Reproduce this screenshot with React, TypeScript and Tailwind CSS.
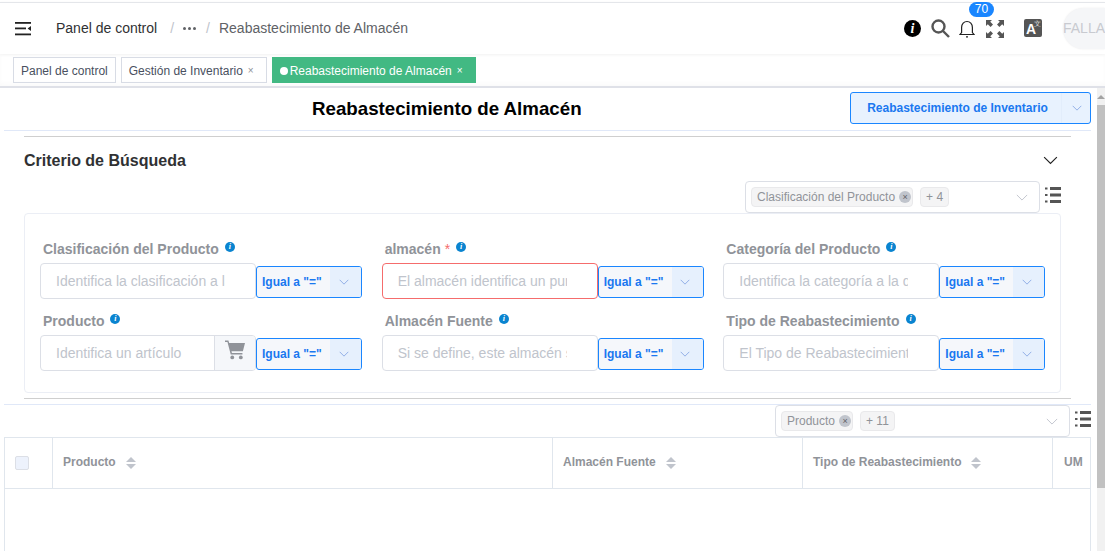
import React from "react";

const Chevron = ({ className = "", color = "#c0c4cc", w = 14 }: { className?: string; color?: string; w?: number }) => (
  <svg width={w} height={w / 2 + 1} viewBox="0 0 14 8" className={className} fill="none" stroke={color} strokeWidth="1.1">
    <path d="M1 1l6 6 6-6" />
  </svg>
);

const InfoDot = () => (
  <span className="ml-[6px] mt-[1px] inline-flex h-[10px] w-[10px] items-center justify-center rounded-full bg-[#0a84d0] text-[8px] font-bold italic leading-none text-white [font-family:'Liberation_Serif',serif]">
    i
  </span>
);

const ListIcon = () => (
  <svg width="16" height="16" viewBox="0 0 16 16" fill="#555">
    <rect x="0" y="0.5" width="2.5" height="2" />
    <rect x="5" y="0" width="11" height="3" />
    <rect x="0" y="7" width="2.5" height="2" />
    <rect x="5" y="6.5" width="11" height="3" />
    <rect x="0" y="13.5" width="2.5" height="2" />
    <rect x="5" y="13" width="11" height="3" />
  </svg>
);

const SortIcon = () => (
  <svg width="10" height="12" viewBox="0 0 10 12" fill="#c0c4cc" className="ml-[10px] mt-[1px]">
    <path d="M5 0l5 5H0z" />
    <path d="M0 7h10l-5 5z" />
  </svg>
);

const CartIcon = () => (
  <svg width="20" height="20" viewBox="0 0 21 20" fill="#909399" className="mb-[6px]">
    <path d="M0 0h3.6l.8 2.6H21l-2.2 8.6H6.8l.5 2h11v1.6H6L2.6 1.6H0z" />
    <circle cx="7.6" cy="17.8" r="2" />
    <circle cx="16.6" cy="17.8" r="2" />
  </svg>
);

const OpSelect = () => (
  <div className="mt-[2px] flex h-[32px] w-[106px] shrink-0 overflow-hidden rounded-[3px] border border-[#1a86ff] bg-[#f5f7fb]">
    <div className="flex flex-1 items-center pl-[5px] text-[12px] font-bold text-[#1a78f0]">Igual a "="</div>
    <div className="flex w-[31px] items-center justify-center bg-[#e6f0fd] pr-[4px]">
      <Chevron w={10} color="#7d9fe0" />
    </div>
  </div>
);

type FieldProps = {
  label: string;
  placeholder: string;
  required?: boolean;
  cart?: boolean;
};

const Field = ({ label, placeholder, required, cart }: FieldProps) => (
  <div>
    <div className="-mt-[1px] flex h-[22px] items-start pl-[3px] text-[14px] font-bold leading-[16px] text-[#909399]">
      <span>{label}</span>
      {required && <span className="ml-[4px] font-normal text-[#f56c6c]">*</span>}
      <InfoDot />
    </div>
    <div className="flex items-center">
      <div
        className={`flex h-[36px] w-[216px] shrink-0 overflow-hidden rounded-[4px] border ${
          required ? "border-[#f56c6c]" : "border-[#dcdfe6]"
        } bg-white`}
      >
        <input
          readOnly
          placeholder={placeholder}
          className={`h-full min-w-0 flex-1 pl-[15px] text-[14px] outline-none placeholder:text-[#c0c4cc] ${cart ? "pr-[15px]" : "pr-[30px]"}`}
        />
        {cart && (
          <div className="flex w-[41px] shrink-0 items-center justify-center border-l border-[#dcdfe6] bg-[#f5f7fa]">
            <CartIcon />
          </div>
        )}
      </div>
      <OpSelect />
    </div>
  </div>
);

const Tag = ({ text, close }: { text: string; close?: boolean }) => (
  <span className={`flex h-[20px] items-center rounded-[4px] border border-[#e9e9eb] bg-[#f4f4f5] pb-[1px] pl-[5px] text-[12px] text-[#909399] ${close ? "pr-[1px]" : "pr-[5px]"}`}>
    {text}
    {close && (
      <span className="ml-[4px] mt-[1px] flex h-[12px] w-[12px] items-center justify-center rounded-full bg-[#c0c4cc] text-[9px] leading-none text-[#606266]">
        ×
      </span>
    )}
  </span>
);

const ColumnPicker = ({ tags }: { tags: React.ReactNode }) => (
  <div className="flex items-start">
    <div className="flex h-[32px] w-[295px] items-center gap-[7px] rounded-[4px] border border-[#dcdfe6] bg-white pl-[5px] pr-[11px]">
      {tags}
      <Chevron className="ml-auto" w={12} />
    </div>
    <div className="ml-[5px] mt-[6px] w-[16px]">
      <ListIcon />
    </div>
  </div>
);

const HeadCell = ({ label, className }: { label: string; className: string }) => (
  <div className={`flex items-center border-r border-[#e0e6ed] pb-[2px] pl-[10px] text-[12px] font-bold text-[#909399] ${className}`}>
    {label}
    <SortIcon />
  </div>
);

export default function App() {
  return (
    <div className="relative flex h-[551px] w-[1105px] flex-col overflow-hidden bg-white text-[#303133] [font-family:'Liberation_Sans',Arial,sans-serif]">
      {/* top bar */}
      <header className="mt-[2px] flex h-[52px] shrink-0 items-center border-t border-[#e4e6ea] shadow-[0_1px_3px_rgba(0,0,0,0.06)]">
        <svg width="17" height="14" viewBox="0 0 17 14" fill="#222" className="ml-[15px] shrink-0">
          <rect x="0" y="0" width="16" height="1.8" />
          <rect x="0" y="5.5" width="11" height="1.8" />
          <rect x="0" y="11.5" width="16" height="1.8" />
          <path d="M16 4v5l-3.4-2.5z" />
        </svg>
        <span className="ml-[24px] text-[14px] text-[#303133]">Panel de control</span>
        <span className="ml-[13px] text-[14px] text-[#c0c4cc]">/</span>
        <span className="ml-[9px] flex items-center gap-[2px]">
          <i className="h-[3px] w-[3px] rounded-full bg-[#606266]" />
          <i className="h-[3px] w-[3px] rounded-full bg-[#606266]" />
          <i className="h-[3px] w-[3px] rounded-full bg-[#606266]" />
        </span>
        <span className="ml-[10px] text-[14px] text-[#c0c4cc]">/</span>
        <span className="ml-[9px] text-[14px] text-[#606266]">Reabastecimiento de Almacén</span>

        <div className="ml-auto flex h-full items-center">
          <span className="flex h-[17px] w-[17px] items-center justify-center rounded-full bg-black text-[14px] font-bold italic leading-none text-white [font-family:'Liberation_Serif',serif]">
            i
          </span>
          <svg width="19" height="19" viewBox="0 0 19 19" fill="none" stroke="#555" strokeWidth="2.4" className="ml-[10px]">
            <circle cx="7.5" cy="7.5" r="6" />
            <path d="M12 12l6 6" />
          </svg>
          <div className="relative ml-[9px]">
            <svg width="16" height="18" viewBox="0 0 16 18" fill="none" stroke="#222" strokeWidth="1.2">
              <path d="M1 14.5h14l-1.6-2V7.5C13.4 4 11 1.5 8 1.5S2.6 4 2.6 7.5v5z" />
              <path d="M7 16.8h2" />
            </svg>
            <span className="absolute -top-[18px] left-[10px] flex h-[15px] w-[25px] items-center justify-center rounded-full bg-[#1a86ff] text-[12px] leading-none text-white">
              70
            </span>
          </div>
          <svg width="18" height="18" viewBox="0 0 18 18" fill="#555" className="ml-[11px]">
            <path d="M0 0h6L4.2 1.8 7 4.6 4.6 7 1.8 4.2 0 6z" />
            <path d="M18 0v6l-1.8-1.8L13.4 7 11 4.6l2.8-2.8L12 0z" />
            <path d="M0 18v-6l1.8 1.8L4.6 11 7 13.4l-2.8 2.8L6 18z" />
            <path d="M18 18h-6l1.8-1.8L11 13.4l2.4-2.4 2.8 2.8L18 12z" />
          </svg>
          <div className="relative mb-[1px] ml-[20px] flex h-[18px] w-[18px] items-end rounded-[2px] bg-[#555] pb-[1px] pl-[2px] text-[14px] font-bold leading-none text-white">
            A
            <span className="absolute right-[1px] top-[1px] text-[7px] font-normal leading-none text-[#ddd]">文</span>
          </div>
          <div className="ml-[21px] flex h-[41px] w-[42px] items-center overflow-hidden rounded-l-full bg-[#f5f6f8] text-[14px] text-[#c8cad0] shadow-[0_0_2px_rgba(0,0,0,0.08)]">
            FALLA
          </div>
        </div>
      </header>

      {/* tabs */}
      <nav className="flex h-[34px] shrink-0 items-start gap-[5px] border-b-2 border-[#dfe1e8] pl-[13px] pt-[3px] shadow-[inset_0_-3px_4px_rgba(0,0,0,0.02)]">
        <div className="flex h-[26px] items-center border border-[#d8dce5] px-[7px] pt-[1px] text-[12px] text-[#495060]">Panel de control</div>
        <div className="flex h-[26px] items-center border border-[#d8dce5] pl-[7px] pr-[12px] pt-[1px] text-[12px] text-[#495060]">
          Gestión de Inventario
          <span className="ml-[5px] text-[10px] leading-none text-[#909399]">×</span>
        </div>
        <div className="flex h-[26px] items-center bg-[#42b983] pl-[8px] pr-[13px] pt-[1px] text-[12px] text-white">
          <span className="mr-[2px] h-[8px] w-[8px] rounded-full bg-white" />
          Reabastecimiento de Almacén
          <span className="ml-[5px] text-[10px] leading-none">×</span>
        </div>
      </nav>

      <div className="flex min-h-0 flex-1">
        <main className="min-w-0 flex-1 pl-[4px] pr-[6px]">
          {/* title */}
          <div className="flex h-[43px] items-center border-b border-[#e0e8f8]">
            <h1 className="mb-[0px] ml-[308px] text-[18.72px] font-bold leading-none text-black">Reabastecimiento de Almacén</h1>
            <div className="mb-[3px] ml-auto flex h-[32px] w-[241px] overflow-hidden rounded-[3px] border border-[#1a86ff] bg-[#e8f2fe]">
              <div className="flex flex-1 items-center justify-center border-r border-[#e2edfb] pl-[3px] text-[12px] font-bold text-[#1a78f0]">
                Reabastecimiento de Inventario
              </div>
              <div className="flex w-[28px] items-center justify-center pl-[1px]">
                <Chevron w={10} color="#7d9fe0" />
              </div>
            </div>
          </div>

          {/* search section */}
          <section className="mx-[20px] mt-[5px] border-y border-[#cfcfcf]">
            <div className="flex h-[44px] items-start justify-between pr-[13px] pt-[15px]">
              <h2 className="text-[16px] font-bold leading-[18px] text-[#303133]">Criterio de Búsqueda</h2>
              <Chevron className="mt-[4px]" w={15} color="#222" />
            </div>
            <div className="flex justify-end pr-[10px]">
              <ColumnPicker
                tags={
                  <>
                    <Tag text="Clasificación del Producto" close />
                    <Tag text="+ 4" />
                  </>
                }
              />
            </div>
            <div className="mb-[5px] mr-[10px] grid h-[180px] grid-cols-3 content-start gap-x-[20px] gap-y-[15px] rounded-[4px] border border-[#ebeef5] px-[15px] pt-[28px]">
              <Field label="Clasificación del Producto" placeholder="Identifica la clasificación a la que pertenece" />
              <Field label="almacén" required placeholder="El almacén identifica un punto de almacenamiento" />
              <Field label="Categoría del Producto" placeholder="Identifica la categoría a la que pertenece" />
              <Field label="Producto" cart placeholder="Identifica un artículo" />
              <Field label="Almacén Fuente" placeholder="Si se define, este almacén será la fuente" />
              <Field label="Tipo de Reabastecimiento" placeholder="El Tipo de Reabastecimiento determina" />
            </div>
          </section>

          {/* results */}
          <section className="mt-[5px] border-t border-[#e0e8f8]">
            <div className="flex justify-end">
              <ColumnPicker
                tags={
                  <>
                    <Tag text="Producto" close />
                    <Tag text="+ 11" />
                  </>
                }
              />
            </div>
            <div className="h-[200px] border-x border-t border-[#e0e6ed]">
              <div className="flex h-[51px] border-b border-[#e0e6ed]">
                <div className="flex w-[48px] shrink-0 items-center border-r border-[#e0e6ed] pl-[10px]">
                  <span className="h-[14px] w-[14px] rounded-[2px] border border-[#dcdfe6] bg-[#edf2fc]" />
                </div>
                <HeadCell label="Producto" className="w-[500px] shrink-0" />
                <HeadCell label="Almacén Fuente" className="w-[250px] shrink-0" />
                <HeadCell label="Tipo de Reabastecimiento" className="w-[250px] shrink-0" />
                <div className="flex flex-1 items-center pb-[2px] pl-[11px] text-[12px] font-bold text-[#909399]">UM</div>
              </div>
            </div>
          </section>
        </main>

        {/* page scrollbar */}
        <div className="flex w-[8px] shrink-0 flex-col bg-[#f1f1f1]">
          <div className="flex h-[17px] items-center justify-center">
            <span className="h-0 w-0 border-x-[4px] border-b-[4px] border-x-transparent border-b-[#a3a3a3]" />
          </div>
          <div className="h-[383px] bg-[#c1c1c1]" />
        </div>
      </div>
    </div>
  );
}
